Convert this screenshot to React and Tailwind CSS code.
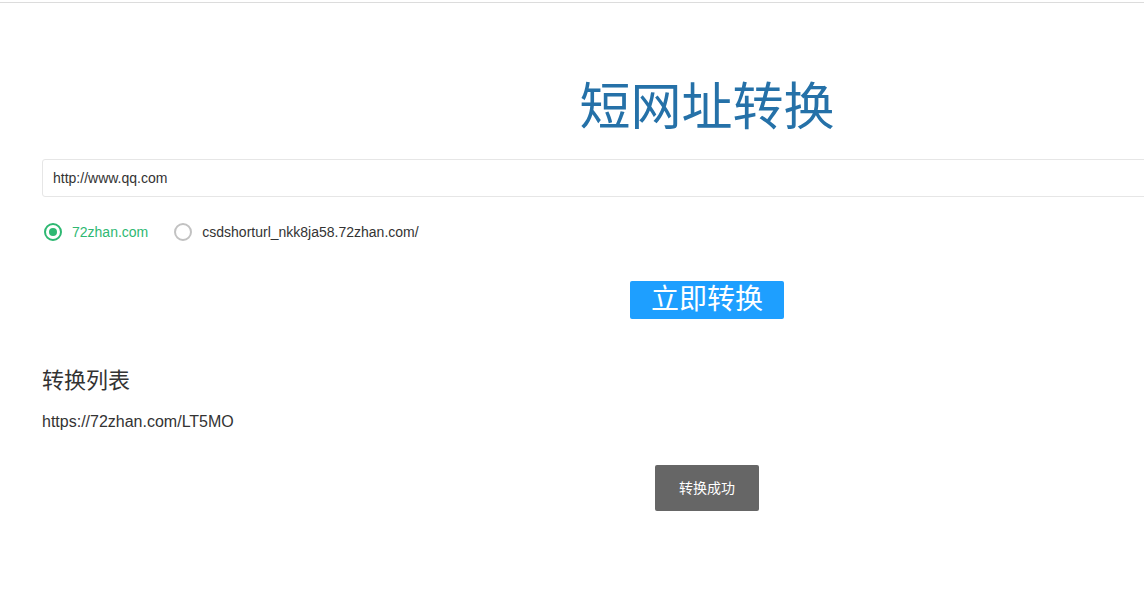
export default function App() {
  const font = { fontFamily: '"Liberation Sans", "Noto Sans CJK SC", sans-serif' };

  return (
    <div className="relative w-full h-[608px] overflow-hidden bg-white" style={font}>
      <div className="w-[1414px] pt-[2px]">
        <div className="border-t border-[#dcdcdc]"></div>

        <div className="px-[42px]">
          {/* Title */}
          <h1 className="mt-[67px] h-[75px] flex items-center justify-center text-[51px] leading-none text-[#2571a8]">
            短网址转换
          </h1>

          {/* URL input */}
          <div className="mt-[14px] h-[38px] flex items-center border border-[#e6e6e6] rounded-[3px] px-[10px] text-[14px] text-[#333]">
            http://www.qq.com
          </div>

          {/* Domain options */}
          <div className="mt-[24px] h-[22px] pl-[2px] flex items-center text-[14px]">
            <label className="flex items-center">
              <span className="w-[18px] h-[18px] rounded-full border-2 border-[#2eb872] flex items-center justify-center">
                <span className="w-[8px] h-[8px] rounded-full bg-[#2eb872]"></span>
              </span>
              <span className="ml-[10px] text-[#2eb872]">72zhan.com</span>
            </label>
            <label className="flex items-center ml-[26px]">
              <span className="w-[18px] h-[18px] rounded-full border-2 border-[#c2c2c2]"></span>
              <span className="ml-[10px] text-[#333]">csdshorturl_nkk8ja58.72zhan.com/</span>
            </label>
          </div>

          {/* Submit */}
          <div className="mt-[38px] flex justify-center">
            <button className="w-[154px] h-[38px] bg-[#1e9fff] rounded-[2px] text-white text-[28px] leading-none flex items-center justify-center">
              立即转换
            </button>
          </div>

          {/* List */}
          <h2 className="mt-[47px] text-[22px] leading-[30px] text-[#333]">转换列表</h2>
          <div className="mt-[15px] text-[16px] leading-[22px] text-[#333]">https://72zhan.com/LT5MO</div>
        </div>
      </div>

      {/* Toast */}
      <div className="absolute left-[655px] top-[465px] w-[104px] h-[46px] bg-[#666] rounded-[2px] flex items-center justify-center text-white text-[14px]">
        转换成功
      </div>
    </div>
  );
}
